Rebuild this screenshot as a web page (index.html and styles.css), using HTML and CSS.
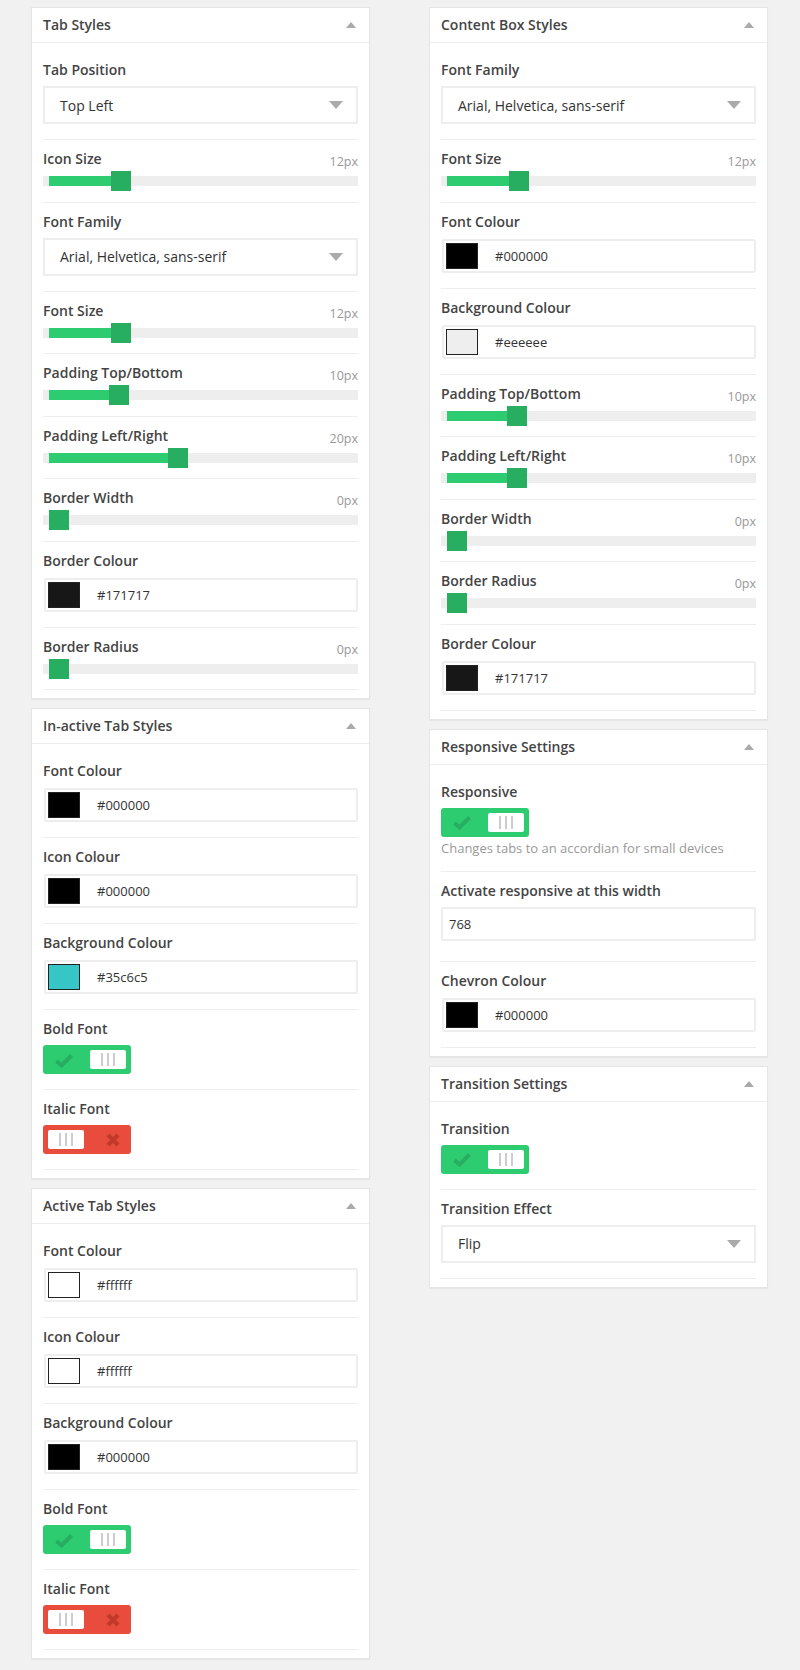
FILE: index.html
```html
<!DOCTYPE html>
<html lang="en">

<head>
  <meta charset="UTF-8">
  <meta name="viewport" content="width=device-width, initial-scale=1.0">
  <title>Tab Settings</title>
  <link rel="stylesheet" href="styles.css">
</head>

<body>

  <div class="columns">

    <div class="column">

      <section class="panel">
        <h2 class="panel-title">Tab Styles <span class="caret"></span></h2>
        <div class="panel-body">
          <div class="field">
            <span class="field-label">Tab Position</span>
            <div class="select">Top Left</div>
          </div>
          <div class="field field-slider">
            <div class="field-head"><span class="field-label">Icon Size</span><span class="field-value">12px</span></div>
            <div class="slider"><span class="fill" style="width:62px"></span><span class="handle"></span></div>
          </div>
          <div class="field">
            <span class="field-label">Font Family</span>
            <div class="select">Arial, Helvetica, sans-serif</div>
          </div>
          <div class="field field-slider">
            <div class="field-head"><span class="field-label">Font Size</span><span class="field-value">12px</span></div>
            <div class="slider"><span class="fill" style="width:62px"></span><span class="handle"></span></div>
          </div>
          <div class="field field-slider">
            <div class="field-head"><span class="field-label">Padding Top/Bottom</span><span class="field-value">10px</span></div>
            <div class="slider"><span class="fill" style="width:60px"></span><span class="handle"></span></div>
          </div>
          <div class="field field-slider">
            <div class="field-head"><span class="field-label">Padding Left/Right</span><span class="field-value">20px</span></div>
            <div class="slider"><span class="fill" style="width:119px"></span><span class="handle"></span></div>
          </div>
          <div class="field field-slider">
            <div class="field-head"><span class="field-label">Border Width</span><span class="field-value">0px</span></div>
            <div class="slider"><span class="fill" style="width:0"></span><span class="handle"></span></div>
          </div>
          <div class="field">
            <span class="field-label">Border Colour</span>
            <div class="color"><span class="swatch" style="background:#171717"></span>#171717</div>
          </div>
          <div class="field field-slider">
            <div class="field-head"><span class="field-label">Border Radius</span><span class="field-value">0px</span></div>
            <div class="slider"><span class="fill" style="width:0"></span><span class="handle"></span></div>
          </div>
        </div>
      </section>

      <section class="panel">
        <h2 class="panel-title">In-active Tab Styles <span class="caret"></span></h2>
        <div class="panel-body">
          <div class="field">
            <span class="field-label">Font Colour</span>
            <div class="color"><span class="swatch" style="background:#000000"></span>#000000</div>
          </div>
          <div class="field">
            <span class="field-label">Icon Colour</span>
            <div class="color"><span class="swatch" style="background:#000000"></span>#000000</div>
          </div>
          <div class="field">
            <span class="field-label">Background Colour</span>
            <div class="color"><span class="swatch" style="background:#35c6c5"></span>#35c6c5</div>
          </div>
          <div class="field">
            <span class="field-label">Bold Font</span>
            <div class="toggle on">
              <svg class="toggle-icon" width="18" height="14" viewBox="0 0 18 14"><path d="M1.5 7 L6.5 11.5 L16.5 1.5" fill="none" stroke="#27ae60" stroke-width="4"/></svg>
              <span class="knob"><i></i><i></i><i></i></span>
            </div>
          </div>
          <div class="field">
            <span class="field-label">Italic Font</span>
            <div class="toggle off">
              <span class="knob"><i></i><i></i><i></i></span>
              <svg class="toggle-icon" width="14" height="14" viewBox="0 0 14 14"><path d="M2 2 L12 12 M12 2 L2 12" fill="none" stroke="#c0392b" stroke-width="4"/></svg>
            </div>
          </div>
        </div>
      </section>

      <section class="panel">
        <h2 class="panel-title">Active Tab Styles <span class="caret"></span></h2>
        <div class="panel-body">
          <div class="field">
            <span class="field-label">Font Colour</span>
            <div class="color"><span class="swatch" style="background:#ffffff"></span>#ffffff</div>
          </div>
          <div class="field">
            <span class="field-label">Icon Colour</span>
            <div class="color"><span class="swatch" style="background:#ffffff"></span>#ffffff</div>
          </div>
          <div class="field">
            <span class="field-label">Background Colour</span>
            <div class="color"><span class="swatch" style="background:#000000"></span>#000000</div>
          </div>
          <div class="field">
            <span class="field-label">Bold Font</span>
            <div class="toggle on">
              <svg class="toggle-icon" width="18" height="14" viewBox="0 0 18 14"><path d="M1.5 7 L6.5 11.5 L16.5 1.5" fill="none" stroke="#27ae60" stroke-width="4"/></svg>
              <span class="knob"><i></i><i></i><i></i></span>
            </div>
          </div>
          <div class="field">
            <span class="field-label">Italic Font</span>
            <div class="toggle off">
              <span class="knob"><i></i><i></i><i></i></span>
              <svg class="toggle-icon" width="14" height="14" viewBox="0 0 14 14"><path d="M2 2 L12 12 M12 2 L2 12" fill="none" stroke="#c0392b" stroke-width="4"/></svg>
            </div>
          </div>
        </div>
      </section>

    </div>

    <div class="column">

      <section class="panel">
        <h2 class="panel-title">Content Box Styles <span class="caret"></span></h2>
        <div class="panel-body">
          <div class="field">
            <span class="field-label">Font Family</span>
            <div class="select">Arial, Helvetica, sans-serif</div>
          </div>
          <div class="field field-slider">
            <div class="field-head"><span class="field-label">Font Size</span><span class="field-value">12px</span></div>
            <div class="slider"><span class="fill" style="width:62px"></span><span class="handle"></span></div>
          </div>
          <div class="field">
            <span class="field-label">Font Colour</span>
            <div class="color"><span class="swatch" style="background:#000000"></span>#000000</div>
          </div>
          <div class="field">
            <span class="field-label">Background Colour</span>
            <div class="color"><span class="swatch" style="background:#eeeeee"></span>#eeeeee</div>
          </div>
          <div class="field field-slider">
            <div class="field-head"><span class="field-label">Padding Top/Bottom</span><span class="field-value">10px</span></div>
            <div class="slider"><span class="fill" style="width:60px"></span><span class="handle"></span></div>
          </div>
          <div class="field field-slider">
            <div class="field-head"><span class="field-label">Padding Left/Right</span><span class="field-value">10px</span></div>
            <div class="slider"><span class="fill" style="width:60px"></span><span class="handle"></span></div>
          </div>
          <div class="field field-slider">
            <div class="field-head"><span class="field-label">Border Width</span><span class="field-value">0px</span></div>
            <div class="slider"><span class="fill" style="width:0"></span><span class="handle"></span></div>
          </div>
          <div class="field field-slider">
            <div class="field-head"><span class="field-label">Border Radius</span><span class="field-value">0px</span></div>
            <div class="slider"><span class="fill" style="width:0"></span><span class="handle"></span></div>
          </div>
          <div class="field">
            <span class="field-label">Border Colour</span>
            <div class="color"><span class="swatch" style="background:#171717"></span>#171717</div>
          </div>
        </div>
      </section>

      <section class="panel">
        <h2 class="panel-title">Responsive Settings <span class="caret"></span></h2>
        <div class="panel-body">
          <div class="field field-help">
            <span class="field-label">Responsive</span>
            <div class="toggle on">
              <svg class="toggle-icon" width="18" height="14" viewBox="0 0 18 14"><path d="M1.5 7 L6.5 11.5 L16.5 1.5" fill="none" stroke="#27ae60" stroke-width="4"/></svg>
              <span class="knob"><i></i><i></i><i></i></span>
            </div>
            <p class="help">Changes tabs to an accordian for small devices</p>
          </div>
          <div class="field field-text">
            <span class="field-label">Activate responsive at this width</span>
            <div class="text-input">768</div>
          </div>
          <div class="field">
            <span class="field-label">Chevron Colour</span>
            <div class="color"><span class="swatch" style="background:#000000"></span>#000000</div>
          </div>
        </div>
      </section>

      <section class="panel">
        <h2 class="panel-title">Transition Settings <span class="caret"></span></h2>
        <div class="panel-body">
          <div class="field">
            <span class="field-label">Transition</span>
            <div class="toggle on">
              <svg class="toggle-icon" width="18" height="14" viewBox="0 0 18 14"><path d="M1.5 7 L6.5 11.5 L16.5 1.5" fill="none" stroke="#27ae60" stroke-width="4"/></svg>
              <span class="knob"><i></i><i></i><i></i></span>
            </div>
          </div>
          <div class="field">
            <span class="field-label">Transition Effect</span>
            <div class="select">Flip</div>
          </div>
        </div>
      </section>

    </div>

  </div>

</body>

</html>
```

FILE: styles.css
```css
* {
  margin: 0;
  padding: 0;
  box-sizing: border-box;
}

body {
  background: #f1f1f1;
  font-family: "Open Sans", "Liberation Sans", sans-serif;
  color: #444;
}

.columns {
  display: grid;
  grid-template-columns: 339px 339px;
  column-gap: 59px;
  align-items: start;
  padding: 7px 0 0 31px;
}

.panel {
  background: #fff;
  border: 1px solid #e5e5e5;
  box-shadow: 0 1px 1px rgba(0, 0, 0, .04);
  margin-bottom: 9px;
}

.panel-title {
  display: flex;
  align-items: center;
  justify-content: space-between;
  padding: 7px 13px 7px 11px;
  font-size: 14px;
  font-weight: 600;
  line-height: 20px;
  color: #444;
  border-bottom: 1px solid #eee;
}

.caret {
  width: 0;
  height: 0;
  border-left: 5px solid transparent;
  border-right: 5px solid transparent;
  border-bottom: 6px solid #aaa;
}

.panel-body {
  padding: 8px 11px;
}

.field {
  padding: 9px 0 15px;
  border-bottom: 1px solid #eee;
}

.field-label {
  display: block;
  font-size: 14px;
  font-weight: 600;
  line-height: 20px;
  color: #444;
  margin-bottom: 6px;
}

/* sliders */

.field-slider {
  padding-bottom: 10.5px;
}

.field-head {
  display: flex;
  justify-content: space-between;
  height: 20px;
  margin-bottom: 2px;
}

.field-head .field-label {
  margin: 0;
}

.field-value {
  font-size: 12.5px;
  line-height: 15px;
  padding-top: 5px;
  color: #999;
}

.slider {
  display: flex;
  align-items: center;
  height: 20px;
  padding-left: 6px;
  background: linear-gradient(#eee, #eee) 0 5px / 100% 10px no-repeat;
}

.slider .fill {
  height: 10px;
  background: #2ecc71;
}

.slider .handle {
  width: 20px;
  height: 20px;
  background: #27ae60;
}

/* inputs */

.select {
  display: flex;
  align-items: center;
  justify-content: space-between;
  height: 38px;
  padding: 0 13px 0 15px;
  border: 2px solid #eee;
  font-size: 14px;
  color: #333;
}

.select::after {
  content: '';
  width: 0;
  height: 0;
  border-left: 7px solid transparent;
  border-right: 7px solid transparent;
  border-top: 8px solid #aaa;
}

.color {
  display: flex;
  align-items: center;
  gap: 17px;
  height: 34px;
  margin: 7px 0 0 1px;
  padding: 0 2px;
  border: 2px solid #eee;
  border-radius: 2px;
  font-size: 13px;
  color: #333;
}

.swatch {
  width: 32px;
  height: 26px;
  border: 1px solid #222;
}

.field-text {
  padding-bottom: 20px;
}

.text-input {
  display: flex;
  align-items: center;
  height: 34px;
  padding: 0 6px;
  border: 2px solid #eee;
  border-radius: 2px;
  font-size: 13px;
  color: #333;
}

/* toggles */

.toggle {
  display: flex;
  align-items: center;
  justify-content: space-between;
  width: 88px;
  height: 29px;
  padding: 5px;
  border-radius: 3px;
}

.toggle.on {
  background: #2ecc71;
}

.toggle.off {
  background: #e74c3c;
}

.toggle.on .toggle-icon {
  margin: 2px 0 0 7px;
}

.toggle.off .toggle-icon {
  margin: 1px 6px 0 0;
}

.knob {
  display: flex;
  align-items: center;
  justify-content: center;
  gap: 4px;
  width: 36px;
  height: 19px;
  background: #fff;
  border-radius: 2px;
}

.knob i {
  width: 2px;
  height: 13px;
  background: #ccc;
}

.field-help {
  padding-bottom: 14px;
}

.help {
  margin-top: 3px;
  font-size: 13px;
  line-height: 17px;
  color: #999;
}
```
